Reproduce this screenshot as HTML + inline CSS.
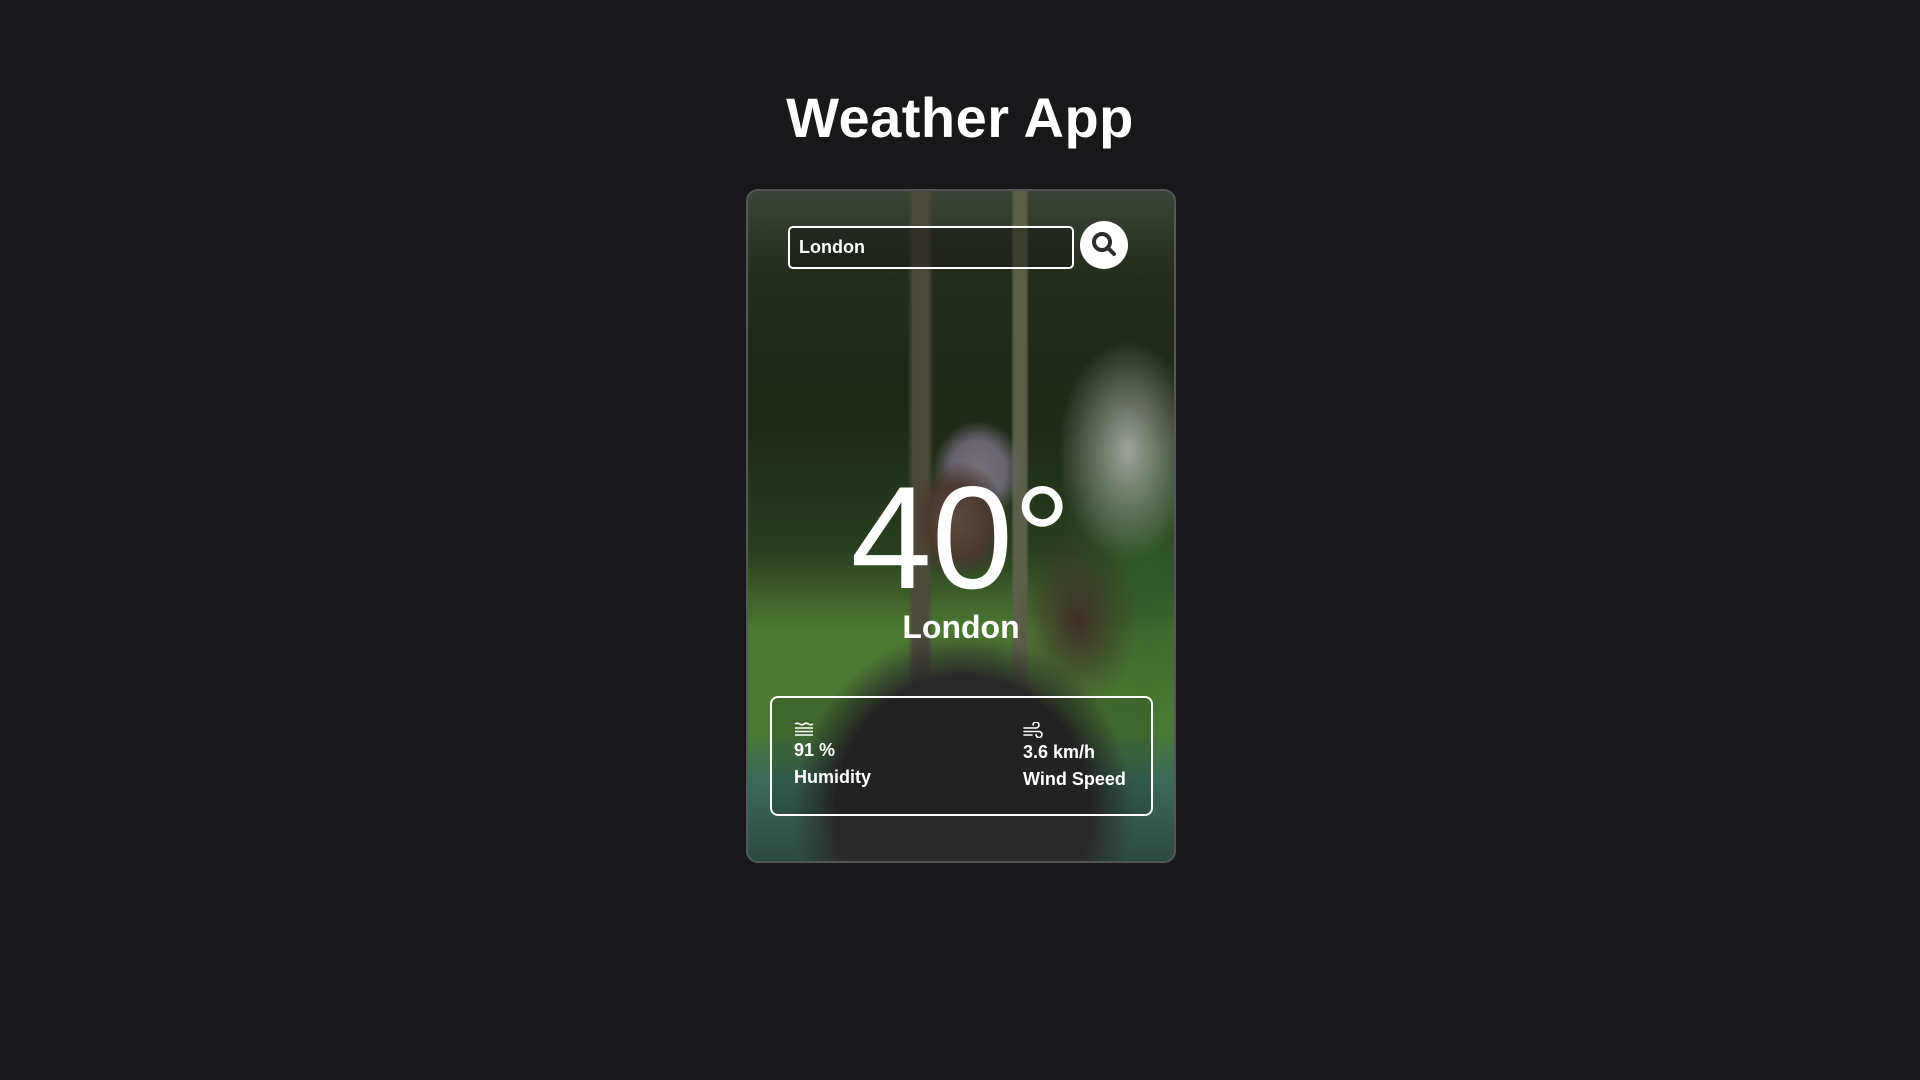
<!DOCTYPE html>
<html><head><meta charset="utf-8"><style>
html,body{margin:0;padding:0;width:1920px;height:1080px;background:#18181b;overflow:hidden;font-family:"Liberation Sans",sans-serif;color:#fff}
h1{position:absolute;left:0;width:1920px;top:80px;margin:0;text-align:center;font-size:56px;font-weight:bold;line-height:76px;letter-spacing:0.5px}
.card{position:absolute;left:746px;top:189px;width:426px;height:670px;border:2px solid #55565c;border-radius:12px;overflow:hidden;
background:
radial-gradient(ellipse 170px 180px at 215px 620px,#2a2929 0,#2a2929 75%,transparent 100%),
radial-gradient(ellipse 50px 60px at 210px 330px,#5a4a42 0,#4a3a32 60%,transparent 100%),
radial-gradient(ellipse 45px 50px at 230px 280px,#77727a 0,#6a6570 60%,transparent 100%),
radial-gradient(ellipse 60px 90px at 330px 430px,#3e2e26 0,transparent 100%),
radial-gradient(ellipse 70px 110px at 380px 260px,#9ea49b 0,transparent 100%),
radial-gradient(ellipse 90px 150px at 400px 380px,#2f5a28 0,transparent 100%),
linear-gradient(90deg,transparent 160px,#4c4a3c 165px,#4c4a3c 180px,transparent 185px,transparent 263px,#5c6048 266px,#5c6048 278px,transparent 281px),
linear-gradient(180deg,#3a4538 0,#222b1c 90px,#1f2a18 240px,#2a3e1f 360px,#4d7a33 440px,#4a7a35 540px,#3a6a5a 590px,#2d4a40 670px);}
.inp{position:absolute;left:40px;top:35px;width:273px;height:39px;border:2px solid #fff;border-radius:5px;background:rgba(20,20,20,.45);font-weight:bold;font-size:18px;line-height:39px;padding-left:9px;box-sizing:content-box}
.btn{position:absolute;left:332px;top:30px;width:48px;height:48px;border-radius:50%;background:#fff}
.temp{position:absolute;left:0;width:426px;top:274px;text-align:center;font-size:146px;line-height:146px;font-weight:normal}
.city{position:absolute;left:0;width:426px;top:416px;text-align:center;font-size:32px;font-weight:bold;line-height:40px}
.info{position:absolute;left:22px;top:505px;width:379px;height:116px;border:2px solid #fff;border-radius:8px;background:rgba(0,0,0,.15)}
.col{position:absolute;top:24px;font-weight:bold;font-size:18px;line-height:27px}
.col svg{display:block;margin-bottom:1px}
</style></head><body>
<h1>Weather App</h1>
<div class="card">
<div class="inp">London</div>
<div class="btn"><svg width="48" height="48" viewBox="0 0 48 48"><circle cx="22" cy="21" r="8" fill="none" stroke="#2a2f2a" stroke-width="4"/><line x1="28" y1="27" x2="34" y2="33" stroke="#2a2f2a" stroke-width="4" stroke-linecap="round"/></svg></div>
<div class="temp">40°</div>
<div class="city">London</div>
<div class="info">
<div class="col" style="left:22px"><svg width="20" height="14" viewBox="0 0 20 14" fill="none" stroke="#fff" stroke-width="1.6"><path d="M1 2q2-1.5 4.5 0t4.5 0 4.5 0 4.5 0M1 6h18M1 9.5h18M1 13h18"/></svg>91 %<br>Humidity</div>
<div class="col" style="left:251px"><svg width="20" height="16" viewBox="0 0 20 16" fill="none" stroke="#fff" stroke-width="1.6" stroke-linecap="round"><path d="M1 6h12a3 3 0 1 0-3-3M1 9.5h15a3 3 0 1 1-3 3M1 13h8"/></svg>3.6 km/h<br>Wind Speed</div>
</div>
</div>
</body></html>
